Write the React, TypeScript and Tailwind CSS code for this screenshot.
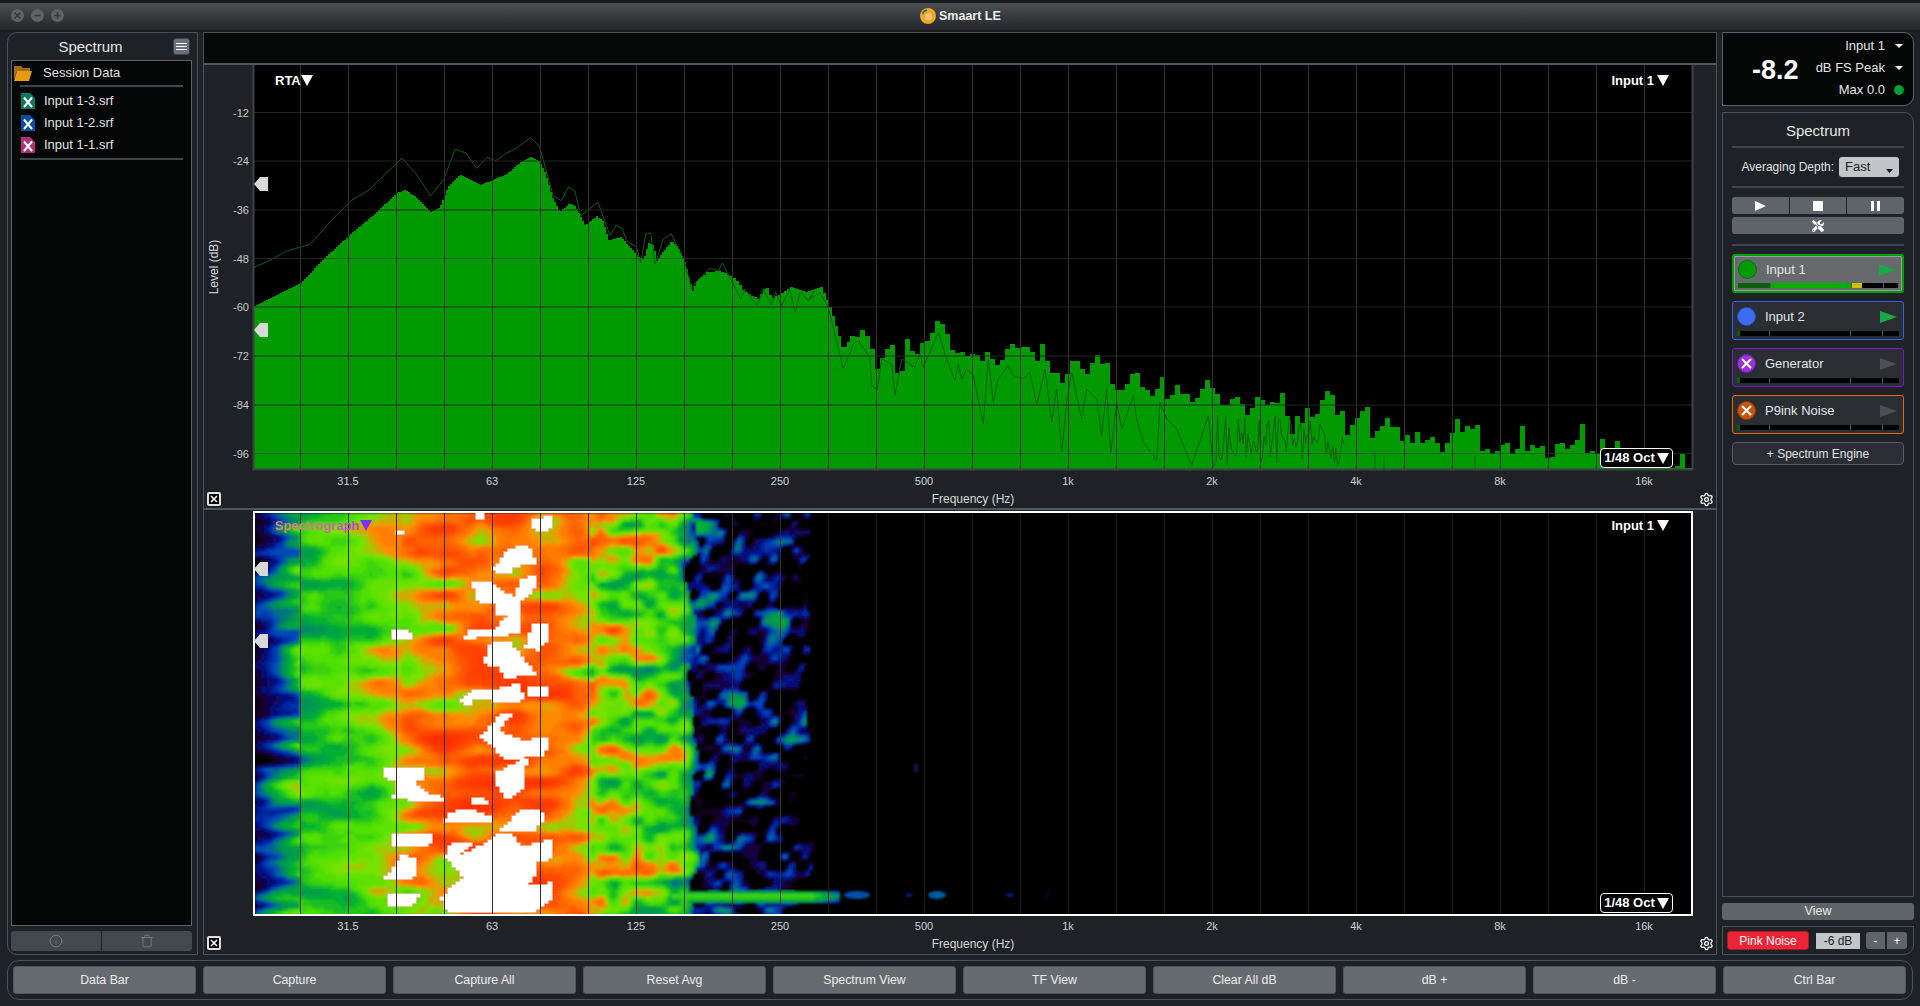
import { Info, Settings, Trash } from 'lucide-react';
import { FaTools } from 'react-icons/fa';

type Pt = [number, number];

// envelope of the RTA fill, in page coordinates
const envelope: Pt[] = [
  [254, 307], [300, 284], [326, 257], [349, 236], [375, 214], [396, 194], [404, 191], [414, 197], [430, 213], [439, 208],
  [447, 188], [459, 176], [469, 180], [480, 186], [494, 180], [506, 175], [520, 163], [530, 158], [539, 163], [545, 175],
  [551, 197], [559, 213], [569, 204], [575, 208], [584, 226], [596, 217], [602, 222], [608, 241], [620, 238], [637, 257],
  [643, 260], [648, 244], [653, 247], [656, 262], [663, 252], [671, 242], [677, 248], [684, 263], [692, 292], [696, 282],
  [706, 273], [720, 272], [735, 280], [743, 292], [757, 300], [765, 287], [771, 300], [790, 288], [804, 293], [820, 288],
  [828, 305], [837, 333], [842, 352], [850, 337], [863, 331], [870, 347], [873, 370], [878, 375], [882, 348], [892, 350],
  [895, 375], [900, 375], [903, 347], [915, 352], [917, 345], [923, 350], [925, 340], [938, 318], [943, 333], [953, 355],
  [973, 353], [980, 373], [988, 346], [992, 370], [1000, 360], [1010, 347], [1027, 350], [1037, 363], [1043, 350], [1048, 372],
  [1058, 373], [1060, 383], [1072, 357], [1078, 363], [1083, 380], [1088, 365], [1097, 370], [1105, 362], [1108, 387], [1120, 392],
  [1132, 368], [1137, 383], [1152, 398], [1155, 387], [1160, 377], [1163, 402], [1175, 388], [1190, 403], [1197, 397], [1202, 387],
  [1208, 380], [1213, 408], [1223, 407], [1232, 397], [1248, 417], [1253, 395], [1260, 410], [1265, 405], [1280, 408], [1292, 437],
  [1298, 415], [1302, 428], [1307, 420], [1315, 412], [1323, 395], [1329, 395], [1331, 420], [1340, 415], [1343, 437], [1348, 427],
  [1358, 428], [1365, 422], [1368, 438], [1378, 433], [1383, 412], [1387, 430], [1395, 428], [1398, 447], [1403, 435], [1410, 445],
  [1415, 432], [1423, 447], [1427, 432], [1440, 450], [1453, 433], [1467, 438], [1472, 423], [1478, 448], [1493, 453], [1505, 445],
  [1513, 460], [1520, 428], [1525, 453], [1532, 448], [1547, 460], [1558, 443], [1567, 452], [1580, 435], [1585, 455], [1593, 448],
  [1597, 468], [1598, 447], [1630, 455], [1640, 465], [1660, 465], [1670, 468], [1692, 470],
];

const peakLeft: Pt[] = ([
  [132, 625], [170, 605], [210, 577], [270, 556], [325, 480], [370, 425], [415, 392], [465, 332], [495, 297], [530, 345],
  [565, 411], [597, 362], [625, 271], [652, 282], [678, 328], [703, 295], [725, 305], [750, 283], [775, 268], [810, 236],
  [832, 263], [865, 410], [885, 425], [903, 384], [918, 395], [933, 470], [975, 430], [1005, 530], [1020, 498], [1035, 510],
  [1045, 545], [1070, 565], [1080, 612], [1092, 525], [1104, 522], [1115, 615], [1135, 540], [1155, 525], [1185, 600], [1205, 690],
  [1215, 670], [1250, 628], [1270, 635], [1280, 612], [1325, 720], [1335, 690], [1365, 740], [1380, 690], [1400, 738], [1410, 700],
  [1425, 740], [1445, 690], [1458, 762], [1470, 700], [1490, 725], [1505, 695],
] as Pt[]).map(([x, y]) => [200 + x / 2.45, 60 + y / 3] as Pt);

const peakRight: Pt[] = ([
  [30, 90], [60, 70], [85, 115], [130, 300], [160, 225], [175, 215], [210, 265], [215, 350], [232, 362], [245, 270],
  [275, 285], [285, 380], [305, 270], [345, 295], [360, 255], [370, 295], [415, 190], [440, 270], [465, 335], [475, 285],
  [485, 330], [500, 300], [520, 320], [550, 465], [565, 270], [580, 400], [595, 330], [625, 290], [640, 320], [670, 330],
  [690, 310], [710, 410], [735, 300], [755, 460], [770, 360], [785, 550], [800, 400], [815, 310], [845, 450], [860, 360],
  [890, 390], [905, 500], [920, 360], [932, 555], [950, 400], [965, 480], [1000, 380], [1010, 450], [1030, 520], [1070, 575],
  [1080, 400], [1100, 450], [1130, 480], [1175, 590], [1225, 440], [1240, 595],
] as Pt[]).map(([x, y]) => [800 + x / 3, 270 + y / 3] as Pt);

function rnd(a: number, b = 0) {
  const s = Math.sin(a * 127.1 + b * 311.7) * 43758.5453;
  return s - Math.floor(s);
}

function interp(pts: Pt[], x: number) {
  if (x <= pts[0][0]) return pts[0][1];
  for (let i = 1; i < pts.length; i++) {
    if (x <= pts[i][0]) {
      const [x0, y0] = pts[i - 1];
      const [x1, y1] = pts[i];
      return y0 + ((y1 - y0) * (x - x0)) / (x1 - x0 || 1);
    }
  }
  return pts[pts.length - 1][1];
}

function buildFill() {
  let d = 'M254 470';
  let x = 254;
  while (x < 1692) {
    const step = x < 700 ? 2 : x < 850 ? 3 : 5;
    let jitter = x > 850 ? (rnd(x) - 0.5) * 7 : 0;
    if (x > 900 && rnd(x, 9) > 0.88) jitter -= 11;
    const y = Math.min(469, Math.round(interp(envelope, x) + jitter));
    d += `L${x} ${y}L${x + step} ${y}`;
    x += step;
  }
  return d + 'L1692 470Z';
}

function buildPeak() {
  const pts: Pt[] = [...peakLeft, ...peakRight];
  for (let x = 1216; x < 1345; x += 1.6) {
    pts.push([x, 468 - rnd(x, 4) * (x > 1320 ? 40 : 52)]);
  }
  return pts.map(([x, y], i) => `${i ? 'L' : 'M'}${x.toFixed(1)} ${y.toFixed(1)}`).join('');
}

const fillPath = buildFill();
const peakPath = buildPeak();
const sparkPath = [1375, 1384, 1475, 1620].map((x) => `M${x} 470L${x} ${452 + rnd(x) * 6}`).join('');

function noise(x: number, y: number, sx: number, sy: number, seed: number) {
  const fx = x / sx;
  const fy = y / sy;
  const ix = Math.floor(fx);
  const iy = Math.floor(fy);
  const tx = fx - ix;
  const ty = fy - iy;
  const ux = tx * tx * (3 - 2 * tx);
  const uy = ty * ty * (3 - 2 * ty);
  const a = rnd(ix + seed, iy);
  const b = rnd(ix + 1 + seed, iy);
  const c = rnd(ix + seed, iy + 1);
  const d = rnd(ix + 1 + seed, iy + 1);
  return a + (b - a) * ux + (c - a) * uy + (a - b - c + d) * ux * uy;
}

const profile: Pt[] = [
  [254, 0.14], [268, 0.26], [285, 0.38], [300, 0.46], [330, 0.53], [370, 0.58], [395, 0.67], [420, 0.75], [470, 0.8], [540, 0.8],
  [570, 0.74], [590, 0.66], [620, 0.59], [670, 0.55], [684, 0.46], [692, 0.3], [700, 0.25], [770, 0.22], [790, 0.06], [805, 0],
];

const stops: [number, number[]][] = [
  [0, [0, 0, 0]], [0.08, [24, 0, 42]], [0.18, [0, 10, 128]], [0.27, [0, 70, 190]], [0.36, [0, 144, 90]], [0.45, [0, 176, 50]],
  [0.55, [80, 224, 0]], [0.63, [120, 226, 0]], [0.7, [255, 140, 0]], [0.82, [255, 72, 0]], [1, [255, 30, 0]],
];

function colorOf(v: number) {
  for (let i = 1; i < stops.length; i++) {
    if (v <= stops[i][0]) {
      const [a, ca] = stops[i - 1];
      const [b, cb] = stops[i];
      const t = (v - a) / (b - a);
      return `rgb(${ca.map((c, k) => Math.round(c + (cb[k] - c) * t)).join(',')})`;
    }
  }
  return 'rgb(255,30,0)';
}

function heat(x: number, y: number) {
  const shift = (noise(0, y, 1, 26, 9) - 0.5) * 18;
  const px = x + (x > 560 ? shift : 0);
  let v = interp(profile, px);
  if (px < 690) {
    v += (noise(x, y, 90, 18, 1) - 0.5) * 0.2;
    v += (noise(x, y, 34, 11, 2) - 0.5) * (x > 400 ? 0.26 : 0.18);
    v += (noise(x, y, 12, 9, 3) - 0.5) * (x > 590 ? 0.24 : 0.05);
    if (x < 300) v += (noise(x, y, 60, 8, 5) - 0.5) * 0.3;
  } else if (v > 0) {
    const n = noise(x + y * 0.3, y, 10, 9, 6);
    const m = noise(x, y, 28, 22, 7);
    v = n < 0.42 ? 0 : v * 0.25 + (n - 0.42) * 0.55 + (m - 0.5) * 0.25;
  }
  if (px > 670 && x < 850 && Math.abs(y - 895) < 6) {
    v = Math.max(v, 0.56 - (Math.abs(y - 895) / 6) * 0.2 - (x > 810 ? (x - 810) * 0.006 : 0));
  }
  return Math.max(0, Math.min(0.99, v));
}

function buildCells() {
  const cells: { x: number; y: number; w: number; c: string }[] = [];
  const size = 3;
  for (let y = 513; y < 914; y += size) {
    let start = 255;
    let cur = Math.round(heat(255, y) * 40);
    for (let x = 255 + size; x <= 840; x += size) {
      const q = x >= 840 ? -1 : Math.round(heat(x, y) * 40);
      if (q !== cur) {
        if (cur > 0) cells.push({ x: start, y, w: x - start, c: colorOf(cur / 40) });
        start = x;
        cur = q;
      }
    }
  }
  return cells;
}

const cells = buildCells();

// saturated blobs of the spectrograph, measured off a 2.53 x 3 zoom
const blobs: Pt[][] = [
  '715,30 760,20 770,45 745,70 725,60 705,35',
  '575,10 590,10 590,25 568,25',
  '370,65 395,60 390,72 372,75',
  '630,160 650,120 690,105 715,120 720,160 670,170 660,190 640,190 610,180',
  '560,215 610,215 640,250 670,260 690,205 725,195 720,235 690,270 680,290 680,370 545,385 550,360 620,360 650,320 620,310 620,280 580,275',
  '720,340 750,340 755,385 730,420 695,410',
  '355,360 400,360 410,385 355,385',
  '610,400 660,400 700,460 725,490 650,505 630,470 590,460',
  '530,570 570,540 620,540 680,520 695,570 640,575 570,565 550,590',
  '705,530 750,530 750,560 705,560',
  '635,615 660,615 625,665 690,690 755,685 745,740 640,745 610,700 585,680',
  '335,770 440,770 445,800 415,820 440,845 495,865 495,878 360,865 375,815 335,800',
  '690,750 700,750 690,840 650,865 625,820 620,790',
  '560,870 590,862 610,885 570,885',
  '525,900 560,900 610,920 610,935 495,935 500,915',
  '690,900 735,905 750,925 715,965 630,965 660,930',
  '355,970 460,972 465,990 440,1008 360,1008',
  '380,1035 415,1045 425,1080 410,1105 332,1105 370,1070',
  '350,1155 430,1150 420,1180 380,1190 350,1185',
  '510,1000 570,995 530,1035 600,1000 620,975 660,975 690,1010 760,990 765,1045 720,1060 720,1100 700,1130 760,1120 760,1170 720,1208 500,1208 485,1165 510,1130 540,1100 510,1060 495,1040',
].map((s) => s.split(' ').map((p) => {
  const [zx, zy] = p.split(',').map(Number);
  return [250 + zx / 2.53, 510 + zy / 3] as Pt;
}));

function inside(poly: Pt[], x: number, y: number) {
  let hit = false;
  for (let i = 0, j = poly.length - 1; i < poly.length; j = i++) {
    const [xi, yi] = poly[i];
    const [xj, yj] = poly[j];
    if (yi > y !== yj > y && x < ((xj - xi) * (y - yi)) / (yj - yi) + xi) hit = !hit;
  }
  return hit;
}

// the blobs are coarse in the source, so rasterise them into wide steps
function buildBlobCells() {
  const out: { x: number; y: number; w: number }[] = [];
  blobs.forEach((poly) => {
    const ys = poly.map((p) => p[1]);
    for (let y = Math.floor(Math.min(...ys) / 3) * 3; y < Math.max(...ys); y += 3) {
      let start = -1;
      for (let x = 380; x < 570; x += 4) {
        const hit = inside(poly, x + 2, y + 1.5);
        if (hit && start < 0) start = x;
        if (!hit && start >= 0) {
          out.push({ x: start, y, w: x - start });
          start = -1;
        }
      }
    }
  });
  return out;
}

const blobCells = buildBlobCells();

const gridX = Array.from({ length: 29 }, (_, i) => 300 + i * 48);
const gridY = [113.5, 162, 211, 259.5, 308, 357, 406, 454.5];
const levels = ['-12', '-24', '-36', '-48', '-60', '-72', '-84', '-96'];
const freqs: [string, number][] = [
  ['31.5', 348], ['63', 492], ['125', 636], ['250', 780], ['500', 924], ['1k', 1068], ['2k', 1212], ['4k', 1356], ['8k', 1500], ['16k', 1644],
];

function Tri({ className = 'fill-white' }: { className?: string }) {
  return (
    <svg width="12" height="11" viewBox="0 0 12 11" className="inline-block shrink-0">
      <path d="M0 0H12L6 11Z" className={className} />
    </svg>
  );
}

function Caret() {
  return (
    <svg width="8" height="4" viewBox="0 0 8 4" className="shrink-0">
      <path d="M0 0H8L4 4Z" fill="#fff" />
    </svg>
  );
}

function Handle({ y }: { y: number }) {
  return <path d={`M254 ${y}L260 ${y - 7}H268V${y + 7}H260Z`} fill="#d8d8d8" />;
}

function FreqLabels({ top }: { top: number }) {
  return (
    <>
      {freqs.map(([label, x]) => (
        <text key={label} x={x} y={top} textAnchor="middle" className="fill-[#d0d0d0] text-[11px]">
          {label}
        </text>
      ))}
      <text x={973} y={top + 18} textAnchor="middle" className="fill-[#d8d8d8] text-[12px]">
        Frequency (Hz)
      </text>
    </>
  );
}

function ChartControls() {
  return (
    <>
      <div className="absolute left-[3px] bottom-[3px] w-[14px] h-[14px] border-2 border-[#e0e0e0] rounded-[2px] bg-black flex items-center justify-center">
        <svg width="8" height="8" viewBox="0 0 8 8">
          <path d="M1 1L7 7M7 1L1 7" stroke="#fff" strokeWidth="1.6" />
        </svg>
      </div>
      <Settings size={15} strokeWidth={2} className="absolute right-[2px] bottom-[2px] text-white" />
      <div className="absolute right-[43px] top-[383px] w-[73px] h-[20px] rounded-[4px] border border-white bg-black flex items-center justify-center gap-[2px] text-[13px] font-bold text-white">
        1/48 Oct
        <Tri />
      </div>
      <div className="absolute right-[47px] top-[6px] flex items-center gap-[3px] text-[13px] font-bold text-white">
        Input 1
        <Tri />
      </div>
    </>
  );
}

function RtaChart() {
  return (
    <div className="relative h-[444px] shrink-0">
      <svg viewBox="204 66 1512 444" className="block w-full h-full">
        <defs>
          <clipPath id="under-fill">
            <path d={fillPath} />
          </clipPath>
        </defs>
        <rect x="254" y="66" width="1438" height="404" fill="#000" />
        <path d={fillPath} fill="#019a01" />
        <path d={peakPath} fill="none" stroke="#0f5f10" strokeWidth="1" />
        <path d={sparkPath} stroke="#0f5f10" strokeWidth="1" />
        {gridY.map((y) => (
          <line key={y} x1="254" x2="1692" y1={y} y2={y} stroke="#242424" strokeWidth="1" />
        ))}
        <g clipPath="url(#under-fill)">
          {gridY.map((y) => (
            <line key={y} x1="254" x2="1692" y1={y} y2={y} stroke="#1c661c" strokeWidth="1" />
          ))}
        </g>
        {gridX.map((x) => (
          <line key={x} x1={x + 0.5} x2={x + 0.5} y1="66" y2="470" stroke="#2e2e2e" strokeWidth="1" />
        ))}
        <path d="M253.5 66V470.5H1692.5V66" fill="none" stroke="#3c4247" strokeWidth="2" />
        <Handle y={185} />
        <Handle y={331} />
        {levels.map((label, i) => (
          <text key={label} x="249" y={gridY[i] + 4} textAnchor="end" className="fill-[#c8c8c8] text-[11px]">
            {label}
          </text>
        ))}
        <text x="0" y="0" transform="translate(218 268) rotate(-90)" textAnchor="middle" className="fill-[#d8d8d8] text-[12px]">
          Level (dB)
        </text>
        <FreqLabels top={486} />
      </svg>
      <div className="absolute left-[71px] top-[6px] flex items-center text-[13px] font-bold text-white">
        RTA
        <Tri />
      </div>
      <ChartControls />
    </div>
  );
}

function SpectrographChart() {
  return (
    <div className="relative h-[443px] shrink-0">
      <svg viewBox="204 510 1512 443" className="block w-full h-full">
        <defs>
          <filter id="soft" x="0" y="0" width="100%" height="100%">
            <feGaussianBlur stdDeviation="0.9" />
          </filter>
        </defs>
        <rect x="254" y="512" width="1438" height="403" fill="#000" />
        <g filter="url(#soft)">
          {cells.map((c, i) => (
            <rect key={i} x={c.x} y={c.y} width={c.w} height="3.2" fill={c.c} />
          ))}
          <ellipse cx="857" cy="895" rx="13" ry="4" fill="#0050a8" />
          <ellipse cx="909" cy="895" rx="3" ry="2" fill="#001a80" />
          <ellipse cx="937" cy="895" rx="9" ry="4" fill="#005a9a" />
          <ellipse cx="1010" cy="895" rx="4" ry="2" fill="#001a80" />
          <ellipse cx="1047" cy="895" rx="2" ry="2" fill="#100040" />
          <ellipse cx="916" cy="768" rx="2" ry="4" fill="#201060" />
        </g>
        {blobCells.map((b, i) => (
          <rect key={i} x={b.x} y={b.y} width={b.w} height="3" fill="#ffb8a8" stroke="#ffb8a8" strokeWidth="1.5" />
        ))}
        {blobCells.map((b, i) => (
          <rect key={i} x={b.x} y={b.y} width={b.w} height="3.2" fill="#fff" />
        ))}
        {gridX.map((x) => (
          <line key={x} x1={x + 0.5} x2={x + 0.5} y1="512" y2="915" stroke={x < 820 ? '#2a2f2a' : '#1d1d1d'} strokeWidth="1" />
        ))}
        <rect x="254" y="512" width="1438" height="403" fill="none" stroke="#fff" strokeWidth="2" />
        <Handle y={569} />
        <Handle y={641} />
        <FreqLabels top={930} />
      </svg>
      <div className="absolute left-[71px] top-[6px] flex items-center text-[13px] font-bold">
        <span className="bg-linear-to-r from-[#f09060] via-[#e060b0] to-[#b038f8] bg-clip-text text-transparent">Spectrograph</span>
        <Tri className="fill-[#7a30ff]" />
      </div>
      <ChartControls />
    </div>
  );
}

function FileIcon({ color }: { color: string }) {
  return (
    <svg width="14" height="16" viewBox="0 0 14 16" className="shrink-0">
      <path d="M0 0H9L14 5V16H0Z" fill={color} />
      <path d="M3 4.5L11 14M11 4.5L3 14" stroke="#fff" strokeWidth="2" />
    </svg>
  );
}

function SessionPanel() {
  const files: [string, string][] = [
    ['Input 1-3.srf', '#0b7a62'],
    ['Input 1-2.srf', '#0b4fa8'],
    ['Input 1-1.srf', '#b0307a'],
  ];
  return (
    <div className="w-[191px] shrink-0 rounded-l-[10px] border border-[#4a5157] flex flex-col pl-[3px] pr-[5px] pb-[3px]">
      <div className="relative h-[27px] pt-[2px] flex items-center justify-center text-[15px] text-[#e6e6e6] pr-[22px]">
        Spectrum
        <div className="absolute right-[2px] top-[5px] w-[17px] h-[17px] rounded-[3px] bg-[#6b7176] border border-[#3d4246] flex flex-col justify-center items-center gap-[2px]">
          <span className="block w-[11px] h-px bg-white" />
          <span className="block w-[11px] h-px bg-white" />
          <span className="block w-[11px] h-px bg-white" />
        </div>
      </div>
      <div className="flex-1 bg-[#050606] border border-[#5a6268] flex flex-col">
        <div className="h-[24px] flex items-center pl-[2px] shrink-0">
          <svg width="18" height="16" viewBox="0 0 18 16" className="shrink-0">
            <path d="M0 1H7L9 3H16V6H3L0 15Z" fill="#a86a08" />
            <path d="M3 6H18L15 16H0Z" fill="#e59a10" />
          </svg>
          <span className="ml-[11px] text-[13px] text-[#e2e2e2]">Session Data</span>
        </div>
        <div className="h-[2px] mx-[8px] bg-[#3f474e] shrink-0" />
        <div className="flex flex-col pt-[3px]">
          {files.map(([name, color]) => (
            <div key={name} className="h-[22px] flex items-center pl-[9px] gap-[9px] text-[13px] text-[#e2e2e2]">
              <FileIcon color={color} />
              {name}
            </div>
          ))}
        </div>
        <div className="h-[2px] mx-[8px] mt-[2px] bg-[#3f474e] shrink-0" />
      </div>
      <div className="mt-[5px] h-[20px] flex rounded-[3px] overflow-hidden shrink-0 gap-px">
        <div className="flex-1 bg-[#43484c] flex items-center justify-center">
          <Info size={14} strokeWidth={1.3} className="text-[#858a8e]" />
        </div>
        <div className="flex-1 bg-[#43484c] flex items-center justify-center">
          <Trash size={14} strokeWidth={1.3} className="text-[#858a8e]" />
        </div>
      </div>
    </div>
  );
}

function MeterBar({ active }: { active?: boolean }) {
  return (
    <div className="relative h-[5px] bg-black flex">
      {active ? (
        <>
          <div className="w-[33px] bg-[#0a5f0a]" />
          <div className="w-[80px] bg-[#00b000]" />
          <div className="w-px" />
          <div className="w-[10px] bg-[#cdbf00]" />
        </>
      ) : (
        <div className="w-[3px] bg-[#0a5f0a]" />
      )}
      <div className="absolute left-[32px] top-0 bottom-0 w-px bg-[#555]" />
      <div className="absolute left-[113px] top-0 bottom-0 w-px bg-[#555]" />
      <div className="absolute left-[145px] top-0 bottom-0 w-px bg-[#555]" />
    </div>
  );
}

function EngineRow({ name, variant }: { name: string; variant: 'input1' | 'input2' | 'gen' | 'pink' }) {
  const frame = {
    input1: 'border-2 border-[#00a000] bg-[#666a6d] outline outline-[#9a9d9f] -outline-offset-3',
    input2: 'border border-[#2f64e8] bg-[#2a2e33]',
    gen: 'border border-[#7a14d0] bg-[#2a2e33]',
    pink: 'border border-[#f0640a] bg-[#2a2e33]',
  }[variant];
  const dot = {
    input1: 'bg-[#049a04] border-[#0d6a0d]',
    input2: 'bg-[#3a6cf5] border-[#2a50b8]',
    gen: 'bg-[#9a30e0] border-[#6a209a]',
    pink: 'bg-[#d05008] border-[#8a3808]',
  }[variant];
  const crossed = variant === 'gen' || variant === 'pink';
  const triColor = crossed ? '#4b4f52' : '#18a848';
  return (
    <div className={`h-[39px] rounded-[3px] px-[4px] flex flex-col shrink-0 ${frame}`}>
      <div className="flex-1 flex items-center text-[13px] text-[#e4e4e4]">
        <div className={`w-[19px] h-[19px] rounded-full border flex items-center justify-center shrink-0 ${dot}`}>
          {crossed && (
            <svg width="11" height="11" viewBox="0 0 11 11">
              <path d="M1 1L10 10M10 1L1 10" stroke="#fff" strokeWidth="2.2" />
            </svg>
          )}
        </div>
        <span className="ml-[9px] flex-1">{name}</span>
        <svg width="17" height="12" viewBox="0 0 17 12" className="shrink-0 mr-[2px]">
          <path d="M0 0L17 6L0 12Z" fill={triColor} />
        </svg>
      </div>
      <div className="mb-[3px]">
        <MeterBar active={variant === 'input1'} />
      </div>
    </div>
  );
}

function RightColumn() {
  return (
    <div className="w-[192px] shrink-0 flex flex-col">
      <div className="h-[74px] shrink-0 bg-[#050606] border border-[#5a6268] rounded-r-[10px] relative text-[#e4e4e4] text-[13px]">
        <div className="absolute right-[10px] top-[3px] flex items-center gap-[10px]">
          Input 1
          <Caret />
        </div>
        <div className="absolute right-[10px] top-[25px] flex items-center gap-[10px]">
          dB FS Peak
          <Caret />
        </div>
        <div className="absolute right-[9px] top-[47px] flex items-center gap-[9px]">
          Max 0.0
          <span className="w-[10px] h-[10px] rounded-full bg-[#00a030]" />
        </div>
        <div className="absolute left-[29px] top-[21px] text-[27px] leading-[32px] font-bold text-white">-8.2</div>
      </div>
      <div className="mt-[6px] h-[785px] shrink-0 border border-[#4a5157] rounded-tr-[10px] px-[9px] flex flex-col">
        <div className="h-[33px] pt-[3px] flex items-center justify-center text-[15px] text-[#e6e6e6] shrink-0">Spectrum</div>
        <div className="h-[2px] bg-[#3f454b] shrink-0" />
        <div className="h-[38px] flex items-center justify-end pr-[5px] gap-[5px] text-[12px] text-[#e0e0e0] shrink-0">
          Averaging Depth:
          <div className="relative w-[60px] h-[20px] rounded-[3px] bg-[#c2c6c8] text-[13px] text-[#222] flex items-center pl-[6px]">
            Fast
            <svg width="7" height="4" viewBox="0 0 7 4" className="absolute right-[6px] bottom-[4px]">
              <path d="M0 0H7L3.500 4Z" fill="#111" />
            </svg>
          </div>
        </div>
        <div className="h-[2px] bg-[#3f454b] shrink-0" />
        <div className="mt-[9px] h-[17px] flex gap-px rounded-[3px] overflow-hidden shrink-0">
          <div className="flex-1 bg-[#5f6468] flex items-center justify-center">
            <svg width="11" height="10" viewBox="0 0 11 10"><path d="M0 0L11 5L0 10Z" fill="#fff" /></svg>
          </div>
          <div className="flex-1 bg-[#5f6468] flex items-center justify-center">
            <span className="w-[10px] h-[10px] bg-white" />
          </div>
          <div className="flex-1 bg-[#5f6468] flex items-center justify-center gap-[3px]">
            <span className="w-[3px] h-[10px] bg-white" />
            <span className="w-[3px] h-[10px] bg-white" />
          </div>
        </div>
        <div className="mt-[3px] h-[17px] rounded-[3px] bg-[#5f6468] flex items-center justify-center text-white text-[12px] shrink-0">
          <FaTools />
        </div>
        <div className="mt-[10px] h-[2px] bg-[#3f454b] shrink-0" />
        <div className="mt-[8px] flex flex-col gap-[8px]">
          <EngineRow name="Input 1" variant="input1" />
          <EngineRow name="Input 2" variant="input2" />
          <EngineRow name="Generator" variant="gen" />
          <EngineRow name="P9ink Noise" variant="pink" />
          <div className="h-[23px] rounded-[4px] border border-[#555b60] bg-[#2a2e33] flex items-center justify-center text-[12px] text-[#e0e0e0]">
            + Spectrum Engine
          </div>
        </div>
      </div>
      <div className="mt-[6px] h-[17px] rounded-[3px] bg-[#5f6468] flex items-center justify-center text-[12.5px] text-[#e8e8e8] shrink-0">
        View
      </div>
      <div className="mt-[6px] flex-1 border border-[#4a5157] rounded-br-[10px] flex items-center px-[4px] text-[12px]">
        <div className="w-[82px] h-[19px] rounded-[3px] bg-[#ee2436] border border-[#a01a28] text-white flex items-center justify-center">Pink Noise</div>
        <div className="ml-[7px] w-[44px] h-[16px] bg-[#c2c6c8] text-[#222] flex items-center justify-center">-6 dB</div>
        <div className="ml-[6px] w-[19px] h-[17px] rounded-l-[3px] bg-[#5f6468] text-white flex items-center justify-center">-</div>
        <div className="ml-[2px] w-[20px] h-[17px] rounded-r-[3px] bg-[#5f6468] text-white flex items-center justify-center">+</div>
      </div>
    </div>
  );
}

const barButtons = ['Data Bar', 'Capture', 'Capture All', 'Reset Avg', 'Spectrum View', 'TF View', 'Clear All dB', 'dB +', 'dB -', 'Ctrl Bar'];

export default function App() {
  return (
    <div className="h-screen w-full overflow-hidden flex flex-col bg-[#1e2226] font-['Liberation_Sans',Arial,sans-serif] text-white">
      <div className="relative h-[32px] shrink-0 flex items-start pt-[3px] bg-[#171b1e]">
        <div className="absolute inset-x-0 top-[3px] h-[27px] bg-linear-to-b from-[#4f4f4f] to-[#22262a]" />
        <div className="relative ml-[11px] mt-[6px] flex gap-[7px]">
          {['M-3 -3L3 3M3 -3L-3 3', 'M-3 0H3', 'M-3 0H3M0 -3V3'].map((d) => (
            <svg key={d} width="13" height="13" viewBox="-6.500 -6.500 13 13">
              <circle r="6.500" fill="#626262" />
              <path d={d} stroke="#33373a" strokeWidth="1.6" />
            </svg>
          ))}
        </div>
        <div className="absolute left-[920px] top-[7px] flex items-center gap-[3px] text-[12.5px] font-bold text-[#ececec]">
          <svg width="16" height="16" viewBox="0 0 16 16" className="shrink-0">
            <circle cx="8" cy="8" r="8" fill="#f0a52c" />
            <path d="M2.500 6A6 6 0 0 1 7 2" fill="none" stroke="#1f7a60" strokeWidth="1.500" />
            <circle cx="8.500" cy="8.500" r="3.500" fill="#f7c873" />
          </svg>
          Smaart LE
        </div>
      </div>

      <div className="flex-1 min-h-0 flex pr-[7px] pl-[7px]">
        <SessionPanel />
        <div className="ml-[5px] w-[1514px] shrink-0 border border-[#4a5157] flex flex-col">
          <div className="h-[32px] shrink-0 bg-[#060707] border-b-2 border-[#50585e]" />
          <RtaChart />
          <div className="h-[2px] shrink-0 bg-[#50585e] -mt-[1px]" />
          <SpectrographChart />
        </div>
        <div className="ml-[5px] flex">
          <RightColumn />
        </div>
      </div>

      <div className="mt-[5px] mb-[6px] mx-[7px] h-[40px] shrink-0 rounded-[12px] border border-[#4a5157] flex items-center pl-[5px] gap-[7px]">
        {barButtons.map((label) => (
          <div key={label} className="w-[183px] h-[28px] rounded-[3px] bg-[#666b70] border border-[#50555a] flex items-center justify-center text-[12.3px] text-[#ececec]">
            {label}
          </div>
        ))}
      </div>
    </div>
  );
}
